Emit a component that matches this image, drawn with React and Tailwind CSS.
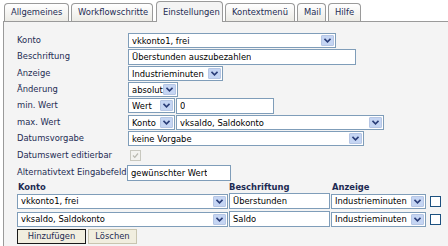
import React from 'react';

const font = { fontFamily: '"DejaVu Sans", Verdana, sans-serif' };

function Arrow() {
  return (
    <span className="flex h-[11px] w-[13px] shrink-0 items-center justify-center rounded-[1px] border border-[#b6c6e4] bg-[#c5d5f3]">
      <svg width="7" height="5" viewBox="0 0 7 5">
        <path d="M0.5 0.8 L3.5 3.8 L6.5 0.8" fill="none" stroke="#2a3d78" strokeWidth="1.6" />
      </svg>
    </span>
  );
}

function Select({ value, className = '' }) {
  return (
    <div className={`flex h-[15px] items-center border border-[#7f9db9] bg-white pl-[3px] pr-[1px] ${className}`}>
      <span className="min-w-0 flex-1 overflow-hidden whitespace-nowrap leading-[12px] text-black">{value}</span>
      <Arrow />
    </div>
  );
}

function Input({ value, className = '' }) {
  return (
    <div className={`flex h-[16px] items-center border border-[#7f9db9] bg-white pl-[3px] ${className}`}>
      <span className="overflow-hidden whitespace-nowrap leading-[12px] text-black">{value}</span>
    </div>
  );
}

function Tab({ label, active, className = '' }) {
  if (active) {
    return (
      <div className={`relative z-10 -mb-px flex h-[21px] items-center rounded-t-[4px] border border-b-0 border-[#9a9a9a] bg-[#f4f4f4] px-[6px] ${className}`}>
        {label}
      </div>
    );
  }
  return (
    <div className={`flex h-[18px] items-center rounded-t-[4px] border border-b-0 border-[#9a9a9a] bg-gradient-to-b from-white to-[#ecebe6] px-[6px] ${className}`}>
      {label}
    </div>
  );
}

function Row({ label, children, className = '' }) {
  return (
    <div className={`flex h-[15px] items-center ${className}`}>
      <div className="w-[111px] shrink-0">{label}</div>
      {children}
    </div>
  );
}

export default function App() {
  return (
    <div className="h-[246px] w-[448px] overflow-hidden bg-white text-[8.4px] leading-none text-[#1d2b53]" style={font}>
      <div className="flex items-end gap-[2px] pl-[4px] pt-[1px]">
        <Tab label="Allgemeines" className="w-[65px]" />
        <Tab label="Workflowschritte" className="w-[82px]" />
        <Tab label="Einstellungen" active className="ml-[1px] w-[67px]" />
        <Tab label="Kontextmenü" className="w-[70px]" />
        <Tab label="Mail" className="w-[29px]" />
        <Tab label="Hilfe" className="w-[33px]" />
      </div>
      <div className="ml-[3px] h-[230px] border-l border-t border-[#9a9a9a] bg-[#f4f4f4] pl-[13px] pt-[11px]">
        <div className="flex flex-col">
          <Row label="Konto">
            <Select value="vkkonto1, frei" className="w-[208px]" />
          </Row>
          <Row label="Beschriftung" className="mt-[1px]">
            <Input value="Überstunden auszubezahlen" className="w-[228px]" />
          </Row>
          <Row label="Anzeige" className="mt-[2px]">
            <Select value="Industrieminuten" className="w-[95px]" />
          </Row>
          <Row label="Änderung" className="mt-[1px]">
            <Select value="absolut" className="w-[50px]" />
          </Row>
          <Row label="min. Wert" className="mt-[1px]">
            <Select value="Wert" className="w-[47px]" />
            <Input value="0" className="ml-[1px] w-[98px]" />
          </Row>
          <Row label="max. Wert" className="mt-[2px]">
            <Select value="Konto" className="w-[47px]" />
            <Select value="vksaldo, Saldokonto" className="ml-[1px] w-[208px]" />
          </Row>
          <Row label="Datumsvorgabe" className="mt-[1px]">
            <Select value="keine Vorgabe" className="w-[236px]" />
          </Row>
          <Row label="Datumswert editierbar" className="mt-[2px]">
            <span className="ml-[2px] flex h-[11px] w-[11px] items-center justify-center border border-[#c8c8bf] bg-[#f3f3ef]">
              <svg width="7" height="7" viewBox="0 0 7 7">
                <path d="M1 3.5 L2.8 5.3 L6 1.5" fill="none" stroke="#b9b9b0" strokeWidth="1.2" />
              </svg>
            </span>
          </Row>
          <div className="mt-[1px] flex h-[16px] items-center">
            <div className="w-[110px] shrink-0">Alternativtext Eingabefeld</div>
            <Input value="gewünschter Wert" className="mt-[2px] w-[104px]" />
          </div>
        </div>

        <div className="mt-[3px] grid grid-cols-[211px_101px_95px_15px] items-center gap-x-[1px] gap-y-[2px]">
          <div className="h-[8px] pl-[1px] font-bold">Konto</div>
          <div className="h-[8px] font-bold">Beschriftung</div>
          <div className="h-[8px] pl-[1px] font-bold">Anzeige</div>
          <div></div>

          <Select value="vkkonto1, frei" />
          <Input value="Überstunden" />
          <Select value="Industrieminuten" />
          <span className="ml-[3px] h-[11px] w-[11px] border border-[#1c5180] bg-white"></span>

          <Select value="vksaldo, Saldokonto" />
          <Input value="Saldo" />
          <Select value="Industrieminuten" />
          <span className="ml-[3px] h-[11px] w-[11px] border border-[#1c5180] bg-white"></span>
        </div>

        <div className="mt-[2px] flex gap-[2px]">
          <button className="h-[15px] w-[69px] border border-[#1a1a1a] bg-[#f1eedf]">Hinzufügen</button>
          <button className="h-[15px] w-[49px] border border-[#c9c5b0] bg-[#f1eedf]">Löschen</button>
        </div>
      </div>
    </div>
  );
}
